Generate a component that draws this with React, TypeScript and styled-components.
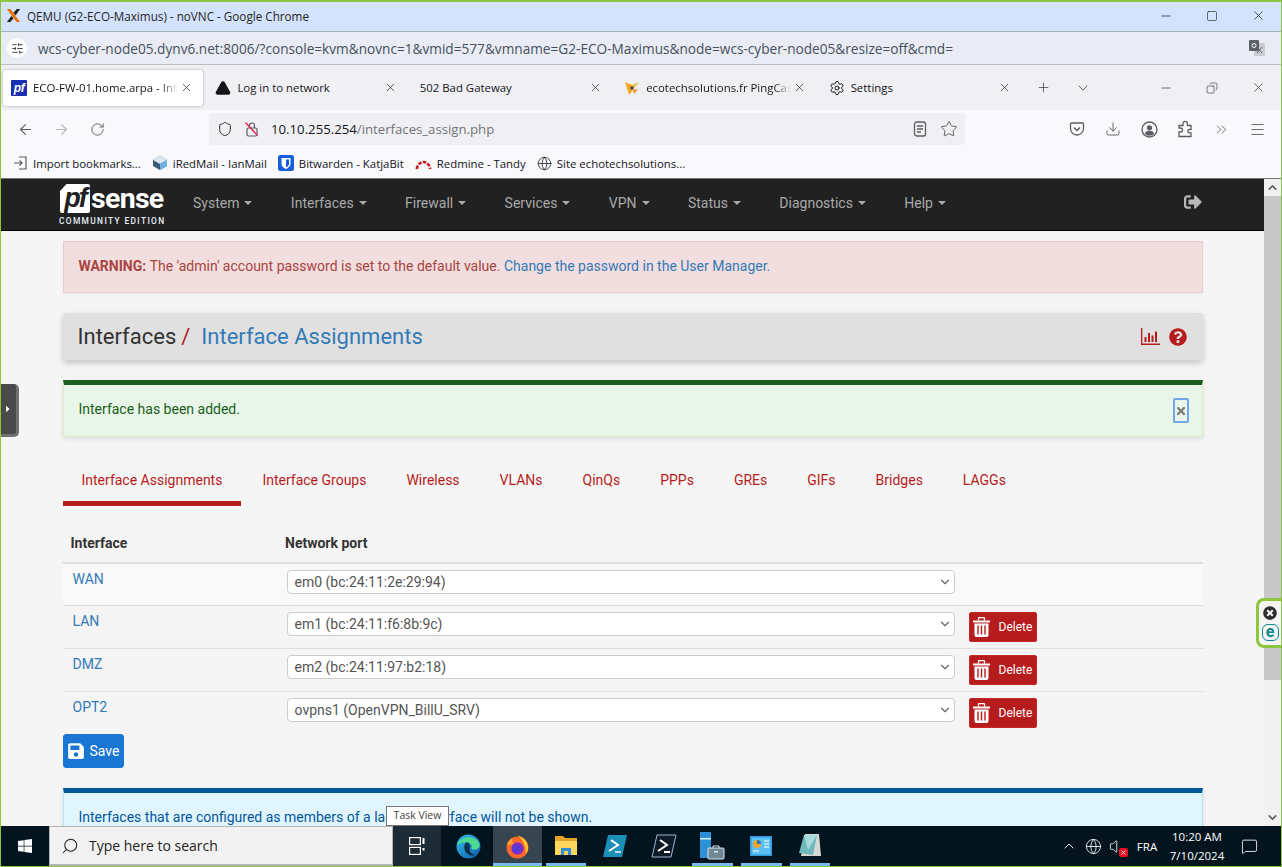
import React from "react";
import styled, { createGlobalStyle } from "styled-components";
import {
  ArrowLeft,
  ArrowRight,
  ChevronDown,
  ChevronUp,
  ChevronsRight,
  Copy,
  Download,
  Globe,
  Menu,
  MessageSquare,
  Minus,
  Plus,
  RotateCw,
  Search,
  Settings,
  Shield,
  SlidersHorizontal,
  Square,
  Star,
  TriangleAlert,
  Volume,
  X,
} from "lucide-react";
import {
  FaCaretRight,
  FaQuestionCircle,
  FaSave,
  FaSignOutAlt,
  FaTimes,
  FaTimesCircle,
  FaWindows,
} from "react-icons/fa";

const GlobalStyle = createGlobalStyle`
  html, body {
    margin: 0;
    padding: 0;
    background: #f5f5f5;
  }
  * {
    box-sizing: border-box;
  }
`;

const UI_FONT = `"Open Sans", "Noto Sans", sans-serif`;
const PAGE_FONT = `Roboto, "Liberation Sans", sans-serif`;

const Frame = styled.div`
  width: 1282px;
  height: 867px;
  overflow: hidden;
  display: flex;
  flex-direction: column;
  border-style: solid;
  border-color: #8cc63f;
  border-width: 2px 1px 1px 1px;
  font-family: ${UI_FONT};
  position: relative;
`;

const TitleBar = styled.div`
  height: 30px;
  flex: none;
  background: #d3e3fd;
  border-bottom: 1px solid #a9b0bb;
  display: flex;
  align-items: center;
  padding: 0 0 2px 5px;
  font-size: 11.7px;
  color: #1f1f1f;
  gap: 6px;
`;

const WindowButtons = styled.div`
  margin-left: auto;
  display: flex;
  align-items: center;
`;

const WindowButton = styled.span`
  width: 46px;
  height: 20px;
  display: flex;
  align-items: center;
  justify-content: center;
  color: #222;
`;

const AddressRow = styled.div`
  height: 33px;
  flex: none;
  background: #e9ecf4;
  border-bottom: 1px solid #b9bcc2;
  display: flex;
  align-items: center;
  padding-left: 6px;
  font-size: 13.65px;
  color: #44505c;
  white-space: nowrap;
`;

const SiteBadge = styled.span`
  width: 20px;
  height: 20px;
  border-radius: 50%;
  background: #fff;
  display: flex;
  align-items: center;
  justify-content: center;
  margin-right: 11px;
  color: #333;
`;

const TranslateSlot = styled.span`
  margin-left: auto;
  margin-right: 15px;
  display: flex;
`;

const TabStrip = styled.div`
  height: 45px;
  flex: none;
  background: #f0f0f4;
  display: flex;
  align-items: center;
  padding-left: 2px;
`;

const Tab = styled.div<{ $active?: boolean }>`
  width: 200px;
  height: 36px;
  margin-right: 4.5px;
  padding: 0 10px 0 8px;
  display: flex;
  align-items: center;
  gap: 6px;
  border-radius: 4px;
  font-size: 11.4px;
  color: #15141a;
  background: ${(p) => (p.$active ? "#fff" : "transparent")};
  box-shadow: ${(p) => (p.$active ? "0 0 3px rgba(0,0,0,.3)" : "none")};
`;

const TabLabel = styled.span<{ $fade?: boolean }>`
  flex: 1;
  white-space: nowrap;
  overflow: hidden;
  ${(p) =>
    p.$fade
      ? "margin-right: -4px; mask-image: linear-gradient(to right, #000 88%, transparent 100%);"
      : ""}
`;

const PfFavicon = styled.span`
  width: 16px;
  height: 16px;
  flex: none;
  border-radius: 1px;
  background: #1a2fb0;
  color: #fff;
  font: italic 700 12px/16px "Liberation Sans", sans-serif;
  letter-spacing: -0.5px;
  text-align: center;
`;

const TabActions = styled.div`
  display: flex;
  align-items: center;
  color: #3c3c44;
`;

const TabAction = styled.span<{ $width: number; $offset?: number }>`
  width: ${(p) => p.$width}px;
  margin-left: ${(p) => p.$offset ?? 0}px;
  display: flex;
  justify-content: center;
`;

const RestoreIcon = styled(Copy)`
  transform: scaleX(-1);
`;

const Toolbar = styled.div`
  height: 38px;
  flex: none;
  background: #f9f9fb;
  display: flex;
  align-items: center;
  padding-left: 15px;
  color: #5b5b66;
`;

const NavButton = styled.span<{ $dim?: boolean }>`
  width: 36px;
  display: flex;
  align-items: center;
  justify-content: center;
  color: ${(p) => (p.$dim ? "#b4b4bb" : "#5b5b66")};
`;

const BackSlot = styled.div`
  display: flex;
  margin-left: -9px;
  width: 202px;
`;

const UrlBar = styled.div`
  width: 756px;
  height: 32px;
  border-radius: 4px;
  background: #f0f0f4;
  display: flex;
  align-items: center;
  padding-left: 8px;
  font-size: 13.2px;
  color: #15141a;
`;

const UrlIcon = styled.span`
  display: flex;
  margin-right: 11px;
`;

const UrlPath = styled.span`
  color: #737378;
`;

const UrlEnd = styled.div`
  margin-left: auto;
  margin-right: 7px;
  display: flex;
  gap: 13px;
  align-items: center;
`;

const ToolbarEnd = styled.div`
  margin-left: 94px;
  display: flex;
`;

const Bookmarks = styled.div`
  height: 31px;
  flex: none;
  background: #f9f9fb;
  border-bottom: 1px solid #777;
  display: flex;
  align-items: center;
  padding-left: 12px;
  font-size: 11.4px;
  color: #15141a;
`;

const Bookmark = styled.span`
  display: flex;
  align-items: center;
  gap: 5px;
  margin-right: 11px;
  white-space: nowrap;
`;

const Viewport = styled.div`
  flex: 1;
  min-height: 0;
  display: flex;
  position: relative;
  background: #f5f5f5;
  font-family: ${PAGE_FONT};
  font-size: 14px;
`;

const Page = styled.div`
  flex: 1;
  min-width: 0;
  overflow: hidden;
`;

const Navbar = styled.div`
  height: 52px;
  background: #212121;
  border-bottom: 1px solid #000;
  display: flex;
  align-items: center;
  padding: 0 62px 0 58px;
`;

const Logo = styled.div`
  width: 106px;
  margin-right: 28px;
  display: flex;
  flex-direction: column;
  color: #fff;
`;

const LogoTop = styled.div`
  display: flex;
  height: 30px;
  align-items: center;
  padding-left: 1px;
`;

const LogoMark = styled.span`
  width: 30px;
  height: 29px;
  background: #fff;
  color: #212121;
  clip-path: polygon(22% 0, 100% 0, 100% 100%, 0 100%, 0 24%);
  border-radius: 2px;
  font: italic 700 27px/28px "Liberation Sans", sans-serif;
  letter-spacing: -2px;
  text-align: center;
  overflow: hidden;
`;

const LogoWord = styled.span`
  font: 700 28.5px/30px ${PAGE_FONT};
  letter-spacing: -0.7px;
  margin-left: 1px;
`;

const LogoEdition = styled.span`
  font: 500 8.4px/10px ${PAGE_FONT};
  letter-spacing: 1.35px;
  margin-top: 2px;
  white-space: nowrap;
  color: #e8f0f8;
`;

const NavItem = styled.span`
  color: #a9a9a9;
  margin-right: 38.4px;
  padding-bottom: 4px;
  display: flex;
  align-items: center;
  gap: 5px;
  white-space: nowrap;
`;

const Caret = styled.i`
  width: 0;
  height: 0;
  border-left: 4px solid transparent;
  border-right: 4px solid transparent;
  border-top: 4px solid #a9a9a9;
`;

const LogoutIcon = styled.span`
  margin-left: auto;
  padding-bottom: 5px;
  display: flex;
  color: #b9b9b9;
`;

const Container = styled.div`
  width: 1140px;
  margin: 0 auto;
  padding-top: 10px;
`;

const Warning = styled.div`
  height: 52px;
  display: flex;
  align-items: center;
  gap: 3.5px;
  padding: 0 0 2px 15px;
  background: #f2dede;
  border: 1px solid #ebccd1;
  color: #a94442;
  box-shadow: 0 2px 5px rgba(0, 0, 0, 0.04);
  margin-bottom: 20px;
`;

const Link = styled.a`
  color: #337ab7;
  text-decoration: none;
`;

const Crumbs = styled.div`
  height: 47px;
  background: #e0e0e0;
  border-radius: 3px;
  box-shadow: 0 3px 6px rgba(0, 0, 0, 0.2);
  display: flex;
  align-items: center;
  padding: 0 16px 0 15px;
  font-size: 22px;
  color: #333;
  margin-bottom: 20px;
`;

const CrumbSlash = styled.span`
  color: #b71c1c;
  margin: 0 11px 0 5px;
`;

const CrumbTools = styled.div`
  margin-left: auto;
  display: flex;
  align-items: center;
  gap: 9px;
  color: #b71c1c;
`;

const Notice = styled.div<{ $tone: "success" | "info" }>`
  background: ${(p) => (p.$tone === "success" ? "#e8f5e9" : "#e1f5fe")};
  border: 1px solid ${(p) => (p.$tone === "success" ? "#dcedc8" : "#b3e5fc")};
  border-top: 5px solid ${(p) => (p.$tone === "success" ? "#1b5e20" : "#01579b")};
  color: ${(p) => (p.$tone === "success" ? "#1b5e20" : "#01579b")};
  box-shadow: 0 2px 5px rgba(0, 0, 0, 0.1);
  display: flex;
  padding: ${(p) => (p.$tone === "success" ? "16px 13px 0 15px" : "16px 15px 0 15px")};
  height: ${(p) => (p.$tone === "success" ? "57px" : "80px")};
`;

const CloseButton = styled.button`
  margin: -3px 0 0 auto;
  width: 16px;
  height: 25px;
  padding: 0;
  background: transparent;
  border: 2px solid #6fa8e4;
  border-radius: 2px;
  color: #7c7c7c;
  display: flex;
  align-items: center;
  justify-content: center;
`;

const Tabs = styled.div`
  margin-top: 18px;
  height: 51px;
  display: flex;
`;

const PageTab = styled.span<{ $active?: boolean }>`
  padding: 4px 19px 0;
  margin-right: 2px;
  display: flex;
  align-items: center;
  color: #b71c1c;
  border-bottom: 5px solid ${(p) => (p.$active ? "#b71c1c" : "transparent")};
`;

const TableHead = styled.div`
  margin-top: 19px;
  height: 39px;
  display: grid;
  grid-template-columns: 214.5px 1fr;
  align-items: center;
  padding: 0 0 2px 8px;
  border-bottom: 2px solid #ddd;
  font-weight: 700;
  color: #333;
`;

const Row = styled.div<{ $tall?: boolean; $striped?: boolean; $last?: boolean }>`
  height: ${(p) => (p.$tall ? 43 : 42)}px;
  display: grid;
  grid-template-columns: 224px 668px auto;
  padding-top: 6px;
  background: ${(p) => (p.$striped ? "#f9f9f9" : "transparent")};
  border-bottom: ${(p) => (p.$last ? "none" : "1px solid #ddd")};
`;

const RowName = styled(Link)`
  padding: 0 0 0 10px;
  line-height: 18px;
`;

const SelectBox = styled.div`
  height: 24px;
  background: #fff;
  border: 1px solid #ccc;
  border-radius: 4px;
  display: flex;
  align-items: center;
  justify-content: space-between;
  padding: 0 2px 1px 7px;
  color: #555;
`;

const DeleteButton = styled.button`
  margin-left: 14px;
  width: 68px;
  height: 30px;
  border: 1px solid #c62828;
  border-radius: 2px;
  background: #b71c1c;
  color: #fff;
  display: flex;
  align-items: center;
  padding: 0 0 0 3px;
  font: 400 12px ${PAGE_FONT};
  gap: 9px;
`;

const SaveButton = styled.button`
  width: 61px;
  height: 34px;
  border: 1px solid #1976d2;
  border-radius: 3px;
  background: #1976d2;
  color: #fff;
  display: flex;
  align-items: center;
  padding: 0 0 1px 3px;
  gap: 5px;
  font: 400 14px ${PAGE_FONT};
  margin-bottom: 20px;
`;

const ScrollBar = styled.div`
  width: 17px;
  flex: none;
  background: #f1f1f1;
  display: flex;
  flex-direction: column;
  color: #606060;
`;

const ScrollArrow = styled.span`
  height: 17px;
  flex: none;
  display: flex;
  align-items: center;
  justify-content: center;
`;

const ScrollThumb = styled.div`
  height: 484px;
  background: #c8c8c8;
  flex: none;
`;

const ScrollGap = styled.div`
  flex: 1;
`;

const Handle = styled.div`
  position: absolute;
  left: 0;
  top: 205px;
  width: 18px;
  height: 53px;
  background: #4a4a4a;
  border: solid #707070;
  border-width: 0 3px 3px 0;
  border-radius: 0 5px 5px 0;
  color: #fff;
  display: flex;
  align-items: center;
  justify-content: center;
  padding-right: 2px;
`;

const EsetTab = styled.div`
  position: absolute;
  right: 0;
  top: 419px;
  width: 25px;
  height: 50px;
  background: #f5f5f5;
  border: solid #8cc63f;
  border-width: 3px 0 3px 3px;
  border-radius: 8px 0 0 8px;
  display: flex;
  flex-direction: column;
  align-items: center;
  justify-content: center;
  gap: 4px;
  color: #2e2e2e;
`;

const EsetMark = styled.span`
  width: 17px;
  height: 17px;
  border: 1.5px solid #0b8a8f;
  border-radius: 6px;
  color: #0b8a8f;
  font: 700 16px/13px ${PAGE_FONT};
  text-align: center;
`;

const Taskbar = styled.div`
  height: 40px;
  flex: none;
  background: #04141f;
  display: flex;
  color: #fff;
  font-family: ${UI_FONT};
  position: relative;
`;

const StartButton = styled.span`
  width: 48px;
  display: flex;
  align-items: center;
  justify-content: center;
`;

const SearchBox = styled.div`
  width: 344px;
  background: #f2f2f2;
  border: 1px solid #b5b5b5;
  border-bottom: 2px solid #b5b5b5;
  display: flex;
  align-items: center;
  padding-left: 11px;
  gap: 10px;
  font-size: 14px;
  color: #222;
`;

const SearchGlyph = styled(Search)`
  transform: scaleX(-1);
`;

const TaskViewButton = styled.span`
  width: 48px;
  background: #1c2b36;
  display: flex;
  align-items: center;
  justify-content: center;
`;

const AppSlot = styled.span<{ $active?: boolean; $open?: boolean }>`
  width: 48.8px;
  display: flex;
  align-items: center;
  justify-content: center;
  position: relative;
  background: ${(p) => (p.$active ? "#36454f" : "transparent")};
  &::after {
    content: "";
    display: ${(p) => (p.$open ? "block" : "none")};
    position: absolute;
    bottom: 0;
    left: ${(p) => (p.$active ? 0 : 4)}px;
    right: ${(p) => (p.$active ? 0 : 4)}px;
    height: 3px;
    background: #76b9ed;
  }
`;

const AppGap = styled.span`
  width: 3px;
`;

const Tray = styled.div`
  position: absolute;
  right: 0;
  top: 0;
  bottom: 0;
  display: flex;
  align-items: center;
  font-size: 11.5px;
`;

const TrayIcon = styled.span<{ $width: number; $offset?: number }>`
  width: ${(p) => p.$width}px;
  margin-left: ${(p) => p.$offset ?? 0}px;
  display: flex;
  justify-content: center;
  position: relative;
`;

const MuteBadge = styled.span`
  position: absolute;
  right: 1px;
  bottom: -2px;
  width: 9px;
  height: 9px;
  border-radius: 2px;
  background: #e81123;
  display: flex;
  align-items: center;
  justify-content: center;
`;

const Clock = styled.div`
  width: 76px;
  text-align: center;
  line-height: 19px;
  margin-right: 4px;
`;

const NotifySlot = styled.span`
  width: 20px;
  margin-right: 22px;
  display: flex;
  justify-content: center;
`;

const Tooltip = styled.div`
  position: absolute;
  left: 385px;
  top: -20px;
  width: 63px;
  height: 20px;
  background: #fff;
  border: 1px solid #767676;
  color: #444;
  font-size: 10.5px;
  line-height: 17px;
  text-align: center;
  white-space: nowrap;
`;

const ProxmoxLogo = () => (
  <svg width="15" height="15" viewBox="0 0 16 16">
    <path d="M1 1h3.500L8 5 5.700 7.600z" fill="#e57000" />
    <path d="M15 1h-3.500L8 5l2.300 2.600z" fill="#1c1c1c" />
    <path d="M1 15h3.500L8 11 5.700 8.400z" fill="#1c1c1c" />
    <path d="M15 15h-3.500L8 11l2.300-2.600z" fill="#e57000" />
    <path d="M5.700 8 8 5.300 10.300 8 8 10.700z" fill="#e57000" />
  </svg>
);

const TranslateIcon = () => (
  <svg width="18" height="18" viewBox="0 0 18 18">
    <rect x="6" y="4" width="11" height="13" rx="1" fill="#c9ccd2" />
    <rect x="1" y="1" width="10" height="11" rx="1" fill="#5b6168" />
    <path d="M9 8l5 6M14 8l-5 6" stroke="#666" strokeWidth="1" />
    <circle cx="6" cy="6.5" r="2" fill="none" stroke="#fff" strokeWidth="1" />
  </svg>
);

const PingCastle = () => (
  <svg width="16" height="16" viewBox="0 0 16 16">
    <path d="M1 2l7 3 1 5-4 5z" fill="#f5a623" />
    <path d="M15 2L8 5l1 5z" fill="#e8c44a" />
    <path d="M9 10l5-1-4 5z" fill="#e98a15" />
    <circle cx="8" cy="8" r="1.8" fill="#4a4a4a" />
  </svg>
);

const InsecureLock = () => (
  <svg width="16" height="16" viewBox="0 0 16 16" fill="none" stroke="#5b5b66" strokeWidth="1.2">
    <rect x="3" y="7" width="10" height="8" rx="1.5" />
    <path d="M5.500 7V4.500a2.500 2.500 0 0 1 5 0V7" />
    <path d="M1.500 1.500l12 13" stroke="#e22850" strokeWidth="1.4" />
  </svg>
);

const ReaderIcon = () => (
  <svg width="14" height="16" viewBox="0 0 14 16" fill="none" stroke="#5b5b66" strokeWidth="1.3">
    <rect x="1.500" y="1" width="11" height="14" rx="2" />
    <path d="M4 5h6M4 8h6M4 11h4" />
  </svg>
);

const PocketIcon = () => (
  <svg width="16" height="16" viewBox="0 0 16 16" fill="none" stroke="#5b5b66" strokeWidth="1.3">
    <path d="M2.500 2h11A1 1 0 0 1 14.500 3v4.500a6.500 6.500 0 0 1-13 0V3a1 1 0 0 1 1-1z" />
    <path d="M5 6.500l3 3 3-3" strokeWidth="1.5" />
  </svg>
);

const AccountIcon = () => (
  <svg width="17" height="17" viewBox="0 0 17 17">
    <circle cx="8.500" cy="8.500" r="7.500" fill="none" stroke="#5b5b66" strokeWidth="1.3" />
    <circle cx="8.500" cy="6.800" r="2.600" fill="#5b5b66" />
    <path d="M3.800 12.500c1-2 2.800-2.700 4.700-2.700s3.700.7 4.700 2.700a6 6 0 0 1-9.400 0z" fill="#5b5b66" />
  </svg>
);

const ExtensionIcon = () => (
  <svg width="16" height="18" viewBox="0 0 16 18" fill="none" stroke="#5b5b66" strokeWidth="1.3">
    <path d="M2 16.500V12h1.500a2 2 0 0 0 0-4H2V5.500h4V3.500a2.200 2.200 0 0 1 4.400 0v2h3.600v4h-1.500a1.700 1.700 0 0 0 0 3.400H14v3.600z" />
  </svg>
);

const ImportGlyph = () => (
  <svg width="15" height="14" viewBox="0 0 15 14" fill="none" stroke="#5b5b66" strokeWidth="1.2">
    <path d="M6 1h7v12H6" />
    <path d="M1 7h8M6.500 4.500L9 7l-2.500 2.500" />
  </svg>
);

const IRedMailIcon = () => (
  <svg width="16" height="16" viewBox="0 0 16 16">
    <path d="M8 1l7 4v6l-7 4-7-4V5z" fill="#3c5a78" />
    <path d="M8 1l7 4-7 4-7-4z" fill="#dfe8f0" />
    <path d="M15 5v6l-7 4V9z" fill="#6fb1e0" />
  </svg>
);

const BitwardenIcon = () => (
  <svg width="16" height="16" viewBox="0 0 16 16">
    <rect width="16" height="16" rx="2.500" fill="#175ddc" />
    <path d="M3.500 3h9v6c0 2.500-2.500 4-4.500 5-2-1-4.500-2.500-4.500-5z" fill="#fff" />
    <path d="M8 4.500h3v4.500c0 1.500-1.500 2.500-3 3.300z" fill="#175ddc" />
  </svg>
);

const RedmineIcon = () => (
  <svg width="17" height="16" viewBox="0 0 17 16" fill="none" stroke="#c8161d" strokeWidth="2.6" strokeDasharray="3.5 1.4">
    <path d="M1.800 14a6.800 8.500 0 0 1 13.400 0" />
  </svg>
);

const ChartIcon = () => (
  <svg width="19" height="17" viewBox="0 0 19 17" fill="#b71c1c">
    <path d="M0 0h1.300v15.500H19V17H0z" />
    <rect x="3.500" y="9" width="2" height="5" />
    <rect x="7" y="5" width="2" height="9" />
    <rect x="10.500" y="7.500" width="2" height="6.500" />
    <rect x="14" y="3.500" width="2" height="10.500" />
  </svg>
);

const TrashIcon = () => (
  <svg width="17" height="20" viewBox="0 0 17 20">
    <path d="M0 3.500h17V5.500H0z" fill="#fff" />
    <path d="M5.500 3.500V1.500A1 1 0 0 1 6.500.5h4a1 1 0 0 1 1 1v2" fill="none" stroke="#fff" strokeWidth="1.3" />
    <path d="M1.500 6.500h14V18a2 2 0 0 1-2 2h-10a2 2 0 0 1-2-2z" fill="#fff" />
    <path d="M5 8.500v9M8.500 8.500v9M12 8.500v9" stroke="#b71c1c" strokeWidth="1.4" />
  </svg>
);

const EdgeIcon = () => (
  <svg width="25" height="25" viewBox="0 0 24 24">
    <defs>
      <linearGradient id="edgeA" x1="0" y1="0" x2="1" y2="1">
        <stop offset="0" stopColor="#35c1f1" />
        <stop offset="1" stopColor="#0c59a4" />
      </linearGradient>
    </defs>
    <circle cx="12" cy="12" r="11.500" fill="url(#edgeA)" />
    <path d="M1 11C3 3 17-1 22.500 9c1 3-1 6-5 6-2 0-3-1-2.500-2 1-2-1-5-5-5-4 0-8 2-9 3z" fill="#4fdb8f" />
    <path d="M10 8c-3 2-3 8 1 11 3 2 6 2 8 1-5 0-7-4-5.500-8C13 9 12 8 10 8z" fill="#04141f" opacity=".75" />
  </svg>
);

const FirefoxIcon = () => (
  <svg width="25" height="25" viewBox="0 0 24 24">
    <circle cx="12" cy="13" r="10.500" fill="#ff6a2b" />
    <path d="M12 1c5 2 10 6 10 12 0 3-1 5-2 6 0-8-3-14-8-18z" fill="#ffc62e" />
    <path d="M2 10c1-3 3-5 5-6-1 3 0 4 2 5-3 1-5 2-7 1z" fill="#ffa02e" />
    <circle cx="12" cy="14" r="6" fill="#7b2fc4" />
    <circle cx="11" cy="14" r="3" fill="#4a3fd8" />
  </svg>
);

const FolderIcon = () => (
  <svg width="24" height="22" viewBox="0 0 24 22">
    <path d="M1 1h8l2 2h12v17H1z" fill="#e0a526" />
    <rect x="1" y="6" width="22" height="14" fill="#ffd75e" />
    <rect x="7" y="13" width="10" height="7" fill="#2f8fd6" />
    <rect x="10" y="16" width="4" height="4" fill="#ffd75e" />
  </svg>
);

const PowerShellIcon = () => (
  <svg width="26" height="24" viewBox="0 0 26 24">
    <path d="M6 1h19l-5 22H1z" fill="#1c8fb8" />
    <path d="M9 6l7 5-9 6" fill="none" stroke="#fff" strokeWidth="2" />
    <path d="M13 18h6" stroke="#c6d7de" strokeWidth="2" />
  </svg>
);

const TerminalIcon = () => (
  <svg width="26" height="24" viewBox="0 0 26 24">
    <path d="M6 1h19l-5 22H1z" fill="#0e1a26" stroke="#9db8d4" strokeWidth="1" />
    <path d="M9 6l7 5-9 6" fill="none" stroke="#fff" strokeWidth="2" />
    <path d="M13 18h6" stroke="#fff" strokeWidth="2" />
  </svg>
);

const ServerManagerIcon = () => (
  <svg width="26" height="30" viewBox="0 0 26 30">
    <rect x="1" y="1" width="11" height="26" fill="#2c90d8" />
    <rect x="1" y="7" width="11" height="1.5" fill="#d5ecfa" />
    <rect x="9" y="17" width="16" height="11" rx="1" fill="#6f8796" stroke="#dfe7ec" />
    <path d="M14 17v-2h6v2" fill="none" stroke="#dfe7ec" />
    <rect x="15" y="20" width="4" height="1.5" fill="#dfe7ec" />
  </svg>
);

const ControlPanelIcon = () => (
  <svg width="22" height="20" viewBox="0 0 22 20">
    <rect width="22" height="20" fill="#2d9ae0" />
    <rect x="1.5" y="1.5" width="19" height="17" fill="#5cc0f2" />
    <circle cx="7" cy="8" r="4" fill="#f4a62a" />
    <path d="M7 8V4a4 4 0 0 1 4 4z" fill="#2872b8" />
    <path d="M14 5h5M14 8h5M14 11h5M3 15h6" stroke="#fff" strokeWidth="1.2" />
  </svg>
);

const NotepadIcon = () => (
  <svg width="24" height="26" viewBox="0 0 24 26">
    <path d="M7 1h14l2 22H3z" fill="#d6d8d2" />
    <path d="M6 2h13L15 22 1 20z" fill="#6fb8bd" />
    <path d="M6 2h13l-9 15z" fill="#a8dbe0" />
  </svg>
);

const TaskViewIcon = () => (
  <svg width="16" height="18" viewBox="0 0 16 18" fill="none" stroke="#fff" strokeWidth="1.2">
    <rect x="0.6" y="0.6" width="10.8" height="7" />
    <rect x="0.6" y="10.4" width="10.8" height="7" />
    <path d="M14.500 1v6M14.500 11v2.500" strokeWidth="2" />
  </svg>
);

const TAB_CLOSE = { size: 13, strokeWidth: 1.2 };

const browserTabs = [
  { label: "Log in to network", icon: <TriangleAlert size={16} fill="#15141a" color="#15141a" /> },
  { label: "502 Bad Gateway" },
  { label: "ecotechsolutions.fr PingCas", icon: <PingCastle />, fade: true },
  { label: "Settings", icon: <Settings size={16} color="#15141a" strokeWidth={1.5} /> },
];

const menuItems = ["System", "Interfaces", "Firewall", "Services", "VPN", "Status", "Diagnostics", "Help"];

const pageTabs = ["Interface Assignments", "Interface Groups", "Wireless", "VLANs", "QinQs", "PPPs", "GREs", "GIFs", "Bridges", "LAGGs"];

const interfaces = [
  { name: "WAN", port: "em0 (bc:24:11:2e:29:94)" },
  { name: "LAN", port: "em1 (bc:24:11:f6:8b:9c)", removable: true },
  { name: "DMZ", port: "em2 (bc:24:11:97:b2:18)", removable: true },
  { name: "OPT2", port: "ovpns1 (OpenVPN_BillU_SRV)", removable: true },
];

export default function App() {
  return (
    <>
      <GlobalStyle />
      <Frame>
        <TitleBar>
          <ProxmoxLogo />
          QEMU (G2-ECO-Maximus) - noVNC - Google Chrome
          <WindowButtons>
            <WindowButton><Minus size={14} strokeWidth={1.3} /></WindowButton>
            <WindowButton><Square size={12} strokeWidth={1.3} /></WindowButton>
            <WindowButton><X size={15} strokeWidth={1.2} /></WindowButton>
          </WindowButtons>
        </TitleBar>

        <AddressRow>
          <SiteBadge><SlidersHorizontal size={13} strokeWidth={1.6} /></SiteBadge>
          wcs-cyber-node05.dynv6.net:8006/?console=kvm&amp;novnc=1&amp;vmid=577&amp;vmname=G2-ECO-Maximus&amp;node=wcs-cyber-node05&amp;resize=off&amp;cmd=
          <TranslateSlot><TranslateIcon /></TranslateSlot>
        </AddressRow>

        <TabStrip>
          <Tab $active>
            <PfFavicon>pf</PfFavicon>
            <TabLabel $fade>ECO-FW-01.home.arpa - Int</TabLabel>
            <X {...TAB_CLOSE} />
          </Tab>
          {browserTabs.map((tab) => (
            <Tab key={tab.label}>
              {tab.icon}
              <TabLabel $fade={tab.fade}>{tab.label}</TabLabel>
              <X {...TAB_CLOSE} />
            </Tab>
          ))}
          <TabActions>
            <TabAction $width={36}><Plus size={15} strokeWidth={1.2} /></TabAction>
            <TabAction $width={44}><ChevronDown size={16} strokeWidth={1.2} /></TabAction>
            <TabAction $width={46} $offset={38}><Minus size={14} strokeWidth={1.3} /></TabAction>
            <TabAction $width={46}><RestoreIcon size={12} strokeWidth={1.3} /></TabAction>
            <TabAction $width={46}><X size={15} strokeWidth={1.2} /></TabAction>
          </TabActions>
        </TabStrip>

        <Toolbar>
          <BackSlot>
            <NavButton><ArrowLeft size={17} strokeWidth={1.5} /></NavButton>
            <NavButton $dim><ArrowRight size={17} strokeWidth={1.5} /></NavButton>
            <NavButton><RotateCw size={15} strokeWidth={1.5} /></NavButton>
          </BackSlot>
          <UrlBar>
            <UrlIcon><Shield size={16} strokeWidth={1.3} /></UrlIcon>
            <UrlIcon><InsecureLock /></UrlIcon>
            10.10.255.254<UrlPath>/interfaces_assign.php</UrlPath>
            <UrlEnd>
              <ReaderIcon />
              <Star size={18} strokeWidth={1.3} color="#5b5b66" />
            </UrlEnd>
          </UrlBar>
          <ToolbarEnd>
            <NavButton><PocketIcon /></NavButton>
            <NavButton><Download size={16} strokeWidth={1.4} /></NavButton>
            <NavButton><AccountIcon /></NavButton>
            <NavButton><ExtensionIcon /></NavButton>
            <NavButton><ChevronsRight size={17} strokeWidth={1.2} /></NavButton>
            <NavButton><Menu size={17} strokeWidth={1.3} /></NavButton>
          </ToolbarEnd>
        </Toolbar>

        <Bookmarks>
          <Bookmark><ImportGlyph />Import bookmarks...</Bookmark>
          <Bookmark><IRedMailIcon />iRedMail - IanMail</Bookmark>
          <Bookmark><BitwardenIcon />Bitwarden - KatjaBit</Bookmark>
          <Bookmark><RedmineIcon />Redmine - Tandy</Bookmark>
          <Bookmark><Globe size={15} strokeWidth={1.2} />Site echotechsolutions...</Bookmark>
        </Bookmarks>

        <Viewport>
          <Page>
            <Navbar>
              <Logo>
                <LogoTop>
                  <LogoMark>pf</LogoMark>
                  <LogoWord>sense</LogoWord>
                </LogoTop>
                <LogoEdition>COMMUNITY EDITION</LogoEdition>
              </Logo>
              {menuItems.map((item) => (
                <NavItem key={item}>{item}<Caret /></NavItem>
              ))}
              <LogoutIcon><FaSignOutAlt size={18} /></LogoutIcon>
            </Navbar>

            <Container>
              <Warning>
                <strong>WARNING:</strong> The 'admin' account password is set to the default value.
                <Link href="#">Change the password in the User Manager.</Link>
              </Warning>

              <Crumbs>
                Interfaces
                <CrumbSlash>/</CrumbSlash>
                <Link href="#">Interface Assignments</Link>
                <CrumbTools>
                  <ChartIcon />
                  <FaQuestionCircle size={18} />
                </CrumbTools>
              </Crumbs>

              <Notice $tone="success">
                Interface has been added.
                <CloseButton><FaTimes size={12} /></CloseButton>
              </Notice>

              <Tabs>
                {pageTabs.map((tab, i) => (
                  <PageTab key={tab} $active={i === 0}>{tab}</PageTab>
                ))}
              </Tabs>

              <TableHead>
                <span>Interface</span>
                <span>Network port</span>
              </TableHead>
              {interfaces.map((row, i) => (
                <Row key={row.name} $tall={i === 1 || i === 2} $striped={i === 0} $last={i === 3}>
                  <RowName href="#">{row.name}</RowName>
                  <SelectBox>
                    {row.port}
                    <ChevronDown size={14} color="#666" />
                  </SelectBox>
                  {row.removable && (
                    <DeleteButton>
                      <TrashIcon />
                      Delete
                    </DeleteButton>
                  )}
                </Row>
              ))}

              <SaveButton>
                <FaSave size={18} />
                Save
              </SaveButton>

              <Notice $tone="info">
                Interfaces that are configured as members of a lagg(4) interface will not be shown.
              </Notice>
            </Container>
          </Page>

          <ScrollBar>
            <ScrollArrow><ChevronUp size={13} strokeWidth={3} /></ScrollArrow>
            <ScrollThumb />
            <ScrollGap />
            <ScrollArrow><ChevronDown size={13} strokeWidth={3} /></ScrollArrow>
          </ScrollBar>

          <Handle><FaCaretRight size={10} /></Handle>
          <EsetTab>
            <FaTimesCircle size={14} />
            <EsetMark>e</EsetMark>
          </EsetTab>
        </Viewport>

        <Taskbar>
          <StartButton><FaWindows size={16} /></StartButton>
          <SearchBox>
            <SearchGlyph size={18} strokeWidth={1.4} />
            Type here to search
          </SearchBox>
          <TaskViewButton><TaskViewIcon /></TaskViewButton>
          <AppGap />
          <AppSlot><EdgeIcon /></AppSlot>
          <AppSlot $active $open><FirefoxIcon /></AppSlot>
          <AppSlot $open><FolderIcon /></AppSlot>
          <AppSlot><PowerShellIcon /></AppSlot>
          <AppSlot><TerminalIcon /></AppSlot>
          <AppSlot $open><ServerManagerIcon /></AppSlot>
          <AppSlot $open><ControlPanelIcon /></AppSlot>
          <AppSlot $open><NotepadIcon /></AppSlot>
          <Tray>
            <TrayIcon $width={24}><ChevronUp size={16} strokeWidth={1.4} /></TrayIcon>
            <TrayIcon $width={24}><Globe size={17} strokeWidth={1.2} /></TrayIcon>
            <TrayIcon $width={24}>
              <Volume size={17} strokeWidth={1.2} />
              <MuteBadge><X size={7} strokeWidth={3} /></MuteBadge>
            </TrayIcon>
            <TrayIcon $width={24} $offset={6}>FRA</TrayIcon>
            <Clock>10:20 AM<br />7/10/2024</Clock>
            <NotifySlot><MessageSquare size={17} strokeWidth={1.2} /></NotifySlot>
          </Tray>
          <Tooltip>Task View</Tooltip>
        </Taskbar>
      </Frame>
    </>
  );
}
